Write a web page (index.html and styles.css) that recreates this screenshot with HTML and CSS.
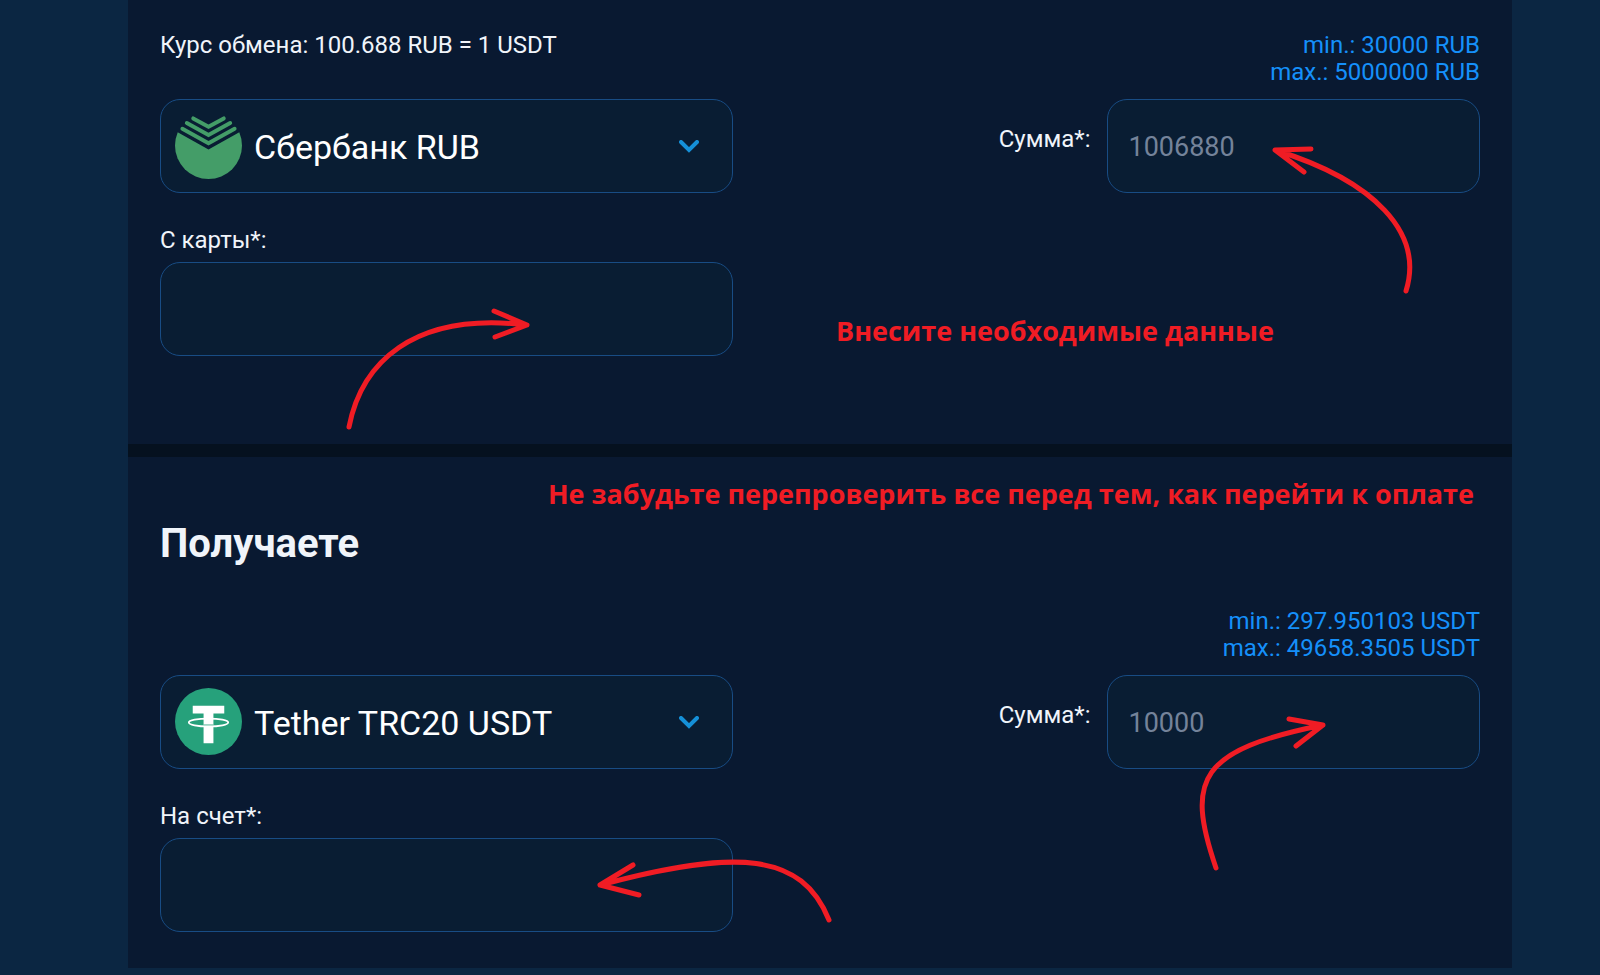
FILE: index.html
```html
<!DOCTYPE html>
<html lang="ru">
<head>
    <meta charset="UTF-8">
    <meta name="viewport" content="width=device-width, initial-scale=1.0">
    <title>Обмен Сбербанк RUB на Tether TRC20 USDT</title>
    <link rel="stylesheet" href="styles.css">
</head>
<body>

    <form class="exchange">

        <!-- Отдаете -->
        <section class="panel panel-give">
            <div class="row row-top">
                <p class="rate">Курс обмена: 100.688 RUB = 1 USDT</p>
                <p class="limits">min.: 30000 RUB<br>max.: 5000000 RUB</p>
            </div>
            <div class="row">
                <div class="picker">
                    <svg class="coin" viewBox="0 0 68 68" aria-hidden="true">
                        <clipPath id="sber-circle"><circle cx="34" cy="34" r="34"/></clipPath>
                        <path d="M0 19L34 38L68 19V68H0z" fill="#449d68" clip-path="url(#sber-circle)"/>
                        <g fill="none" stroke="#449d68" stroke-width="4" stroke-linecap="round">
                            <path d="M7.500 17L34 31.700L60.500 17"/>
                            <path d="M12 11.200L34 23.400L56 11.200"/>
                            <path d="M18.500 6.500L34 15L49.500 6.500"/>
                        </g>
                    </svg>
                    <select class="field" aria-label="Отдаете">
                        <option>Сбербанк RUB</option>
                    </select>
                    <svg class="chevron" viewBox="0 0 20 13" aria-hidden="true"><path d="M2 2l8 8 8-8"/></svg>
                </div>
                <div class="amount">
                    <label for="sum-give">Сумма*:</label>
                    <input class="field" type="text" id="sum-give" placeholder="1006880">
                </div>
            </div>
            <div class="row row-account">
                <div class="account">
                    <label for="card">С карты*:</label>
                    <input class="field" type="text" id="card">
                </div>
                <p class="note note-data">Внесите необходимые данные</p>
            </div>
        </section>

        <!-- Получаете -->
        <section class="panel panel-get">
            <p class="note note-check">Не забудьте перепроверить все перед тем, как перейти к оплате</p>
            <h2>Получаете</h2>
            <div class="row row-top">
                <p class="limits">min.: 297.950103 USDT<br>max.: 49658.3505 USDT</p>
            </div>
            <div class="row">
                <div class="picker">
                    <svg class="coin" viewBox="0 0 68 68" aria-hidden="true">
                        <circle cx="34" cy="34" r="34" fill="#26a17b"/>
                        <path d="M18 18h32v8H39v30H29V26H18z" fill="#fff"/>
                        <ellipse cx="34" cy="35" rx="20" ry="4" fill="none" stroke="#fff" stroke-width="1.8"/>
                        <path d="M29 37.500h10" stroke="#26a17b" stroke-width="0.8"/>
                    </svg>
                    <select class="field" aria-label="Получаете">
                        <option>Tether TRC20 USDT</option>
                    </select>
                    <svg class="chevron" viewBox="0 0 20 13" aria-hidden="true"><path d="M2 2l8 8 8-8"/></svg>
                </div>
                <div class="amount">
                    <label for="sum-get">Сумма*:</label>
                    <input class="field" type="text" id="sum-get" placeholder="10000">
                </div>
            </div>
            <div class="row row-account">
                <div class="account">
                    <label for="wallet">На счет*:</label>
                    <input class="field" type="text" id="wallet">
                </div>
            </div>
        </section>
    </form>

    <!-- Стрелки-подсказки поверх формы -->
    <svg class="arrows" viewBox="0 0 1600 975" aria-hidden="true">
        <path d="M1406 291C1424 233 1375 181 1275 150M1311 149L1275 150L1304 172"/>
        <path d="M349 427C361 365 411 311 527 325M494 311L527 325L495 337"/>
        <path d="M1216 868C1185 778 1200 750 1323 725M1289 719L1323 725L1296 746"/>
        <path d="M829 920C802 853 738 848 600 885M633 865L600 885L639 895"/>
    </svg>

</body>
</html>
```
FILE: styles.css
```css
* {
    box-sizing: border-box;
}

body {
    margin: 0;
    position: relative;
    background-color: #0b2642;
    color: #f0f4fa;
    font-family: 'Roboto', sans-serif;
    font-size: 24px;
    line-height: 27px;
}

p, h2 {
    margin: 0;
}

.exchange {
    margin: 0 88px 8px 128px;
    display: flex;
    flex-direction: column;
    gap: 13px;
    background-color: #05111f;
}

/* Panels */
.panel {
    background-color: #091931;
}

.panel-give {
    padding: 32px 32px 88px;
}

.panel-get {
    padding: 18px 32px 36px;
}

.panel-get h2 {
    margin: 7px 0 40px;
    font-size: 40px;
    line-height: 48px;
    font-weight: 700;
}

.row {
    display: grid;
    grid-template-columns: 573fr 747fr;
}

.row-top {
    margin-bottom: 13px;
}

.row-account {
    margin-top: 34px;
}

.limits {
    grid-column: 2;
    text-align: right;
    color: #1590fa;
}

/* Fields */
.field {
    display: block;
    width: 100%;
    height: 94px;
    padding: 2px 21px 0;
    border: 1px solid #184c84;
    border-radius: 20px;
    outline: none;
    background-color: #091d33;
    color: #fff;
    font-family: inherit;
    font-size: 27px;
}

.field::placeholder {
    color: #74839a;
    opacity: 1;
}

.picker {
    position: relative;
}

.picker .field {
    appearance: none;
    padding: 2px 70px 0 93px;
    font-size: 34px;
}

.coin {
    position: absolute;
    top: 13px;
    left: 15px;
    width: 67px;
    height: 67px;
    pointer-events: none;
}

.chevron {
    position: absolute;
    top: 41px;
    right: 34px;
    width: 20px;
    height: 13px;
    fill: none;
    stroke: #1590d8;
    stroke-width: 4;
    stroke-linecap: round;
    pointer-events: none;
}

.amount {
    display: flex;
    align-items: center;
    justify-content: flex-end;
    gap: 16px;
}

.amount label {
    padding-bottom: 14px;
}

.amount .field {
    width: 50%;
}

.account label {
    display: block;
    margin-bottom: 8px;
}

/* Notes */
.note {
    color: #f01c24;
    font-family: 'Open Sans', sans-serif;
    font-size: 27px;
    line-height: 38px;
    font-weight: 700;
}

.note-data {
    padding: 85px 0 0 103px;
}

.note-check {
    padding-right: 6px;
    text-align: right;
}

.arrows {
    position: absolute;
    top: 0;
    left: 0;
    width: 100%;
    fill: none;
    stroke: #f01c24;
    stroke-width: 5;
    stroke-linecap: round;
    stroke-linejoin: round;
    pointer-events: none;
}
```
